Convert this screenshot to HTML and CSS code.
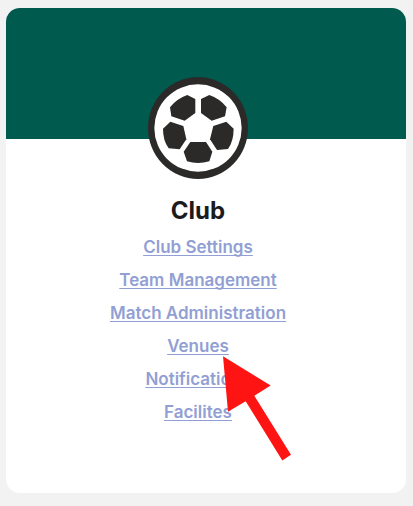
FILE: index.html
```html
<!DOCTYPE html>
<html lang="en">
<head>
    <meta charset="UTF-8">
    <meta name="viewport" content="width=device-width, initial-scale=1.0">
    <title>Club</title>
    <link rel="stylesheet" href="styles.css">
</head>
<body>
    <main class="card">
        <div class="banner"></div>
        <div class="content">
            <svg class="ball" viewBox="24 21 300 306" aria-hidden="true">
                <ellipse cx="174" cy="174" rx="150" ry="153" fill="#2b2a29"/>
                <ellipse cx="174" cy="174" rx="131" ry="131" fill="#fff"/>
                <g fill="#2b2a29">
                    <path d="M142 75L166 87V129L134 152L94 139L90 112Q110 86 142 75Z"/>
                    <path d="M208 75L183 87V129L215 152L255 139L260 112Q240 86 208 75Z"/>
                    <path d="M91 155L130 168L139 208L119 238L86 235Q69 212 69 176Z"/>
                    <path d="M259 155L220 168L210 208L231 240L264 237Q281 212 281 176Z"/>
                    <path d="M151 216H198L217 245L208 274Q174 284 141 274L131 245Z"/>
                </g>
            </svg>
            <h1 class="title">Club</h1>
            <nav class="menu">
                <a href="#">Club Settings</a>
                <a href="#">Team Management</a>
                <a href="#">Match Administration</a>
                <a href="#">Venues</a>
                <a href="#">Notifications</a>
                <a href="#">Facilites</a>
                <svg class="arrow" viewBox="0 0 204 314" aria-hidden="true">
                    <path d="M0 0L143 88L94 119L204 296L178 313L68 135L15 167Z" fill="#ff1414"/>
                </svg>
            </nav>
        </div>
    </main>
</body>
</html>
```

FILE: styles.css
```css
body {
    margin: 0;
    padding: 8px 7px 13px 6px;
    background-color: #f2f2f2;
    font-family: Inter, "Liberation Sans", sans-serif;
}
.card {
    border-radius: 14px;
    overflow: hidden;
    background-color: #fff;
}
.banner {
    height: 131px;
    background-color: #005a4e;
}
.content {
    display: flex;
    flex-direction: column;
    align-items: center;
    margin-top: -62px;
    padding: 0 16px 69px 0;
}
.ball {
    width: 100px;
    height: 102px;
}
.title {
    margin: 16px 0 8px;
    font-size: 24px;
    line-height: 32px;
    font-weight: 700;
    color: #1c1c1e;
}
.menu {
    position: relative;
    display: flex;
    flex-direction: column;
    align-items: center;
    gap: 9px;
}
.menu a {
    font-size: 17px;
    line-height: 24px;
    font-weight: 600;
    color: #929fd4;
    text-decoration: underline;
    text-decoration-thickness: 1px;
    text-decoration-skip-ink: none;
    text-underline-offset: 2px;
}
.arrow {
    position: absolute;
    top: 121px;
    left: calc(50% + 25px);
    width: 68px;
    height: 105px;
}
```
